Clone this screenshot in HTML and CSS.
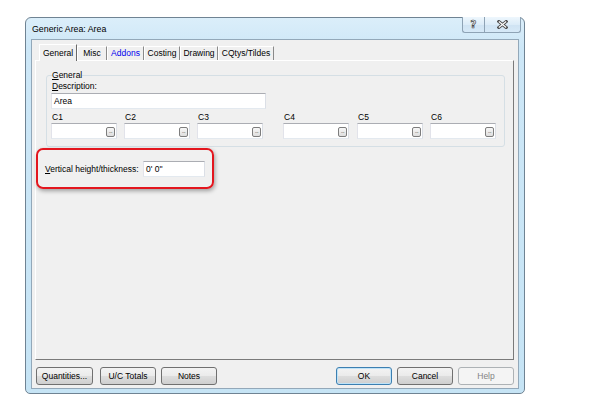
FILE: index.html
```html
<!DOCTYPE html>
<html>
<head>
<meta charset="utf-8">
<link rel="stylesheet" href="styles.css">
</head>
<body>
<div class="window">
  <div class="titlebar">
    <span class="title">Generic Area: Area</span>
    <div class="caption">
      <div class="cbtn help"><span class="qmark">?</span></div>
      <div class="cbtn close">
        <svg width="11" height="9" viewBox="0 0 11 9"><path d="M1.8 1.5 L9.2 7.5 M9.2 1.5 L1.8 7.5" stroke="#4d4d4d" stroke-width="3" stroke-linecap="square" fill="none"/><path d="M1.8 1.5 L9.2 7.5 M9.2 1.5 L1.8 7.5" stroke="#ffffff" stroke-width="1.1" fill="none"/></svg>
      </div>
    </div>
  </div>
  <div class="client">
    <div class="tabs">
      <div class="tab active t-general">General</div>
      <div class="tab t-misc">Misc</div>
      <div class="tab t-addons link">Addons</div>
      <div class="tab t-costing">Costing</div>
      <div class="tab t-drawing">Drawing</div>
      <div class="tab t-cqtys">CQtys/Tildes</div>
    </div>
    <div class="panel">
      <fieldset class="group">
        <legend><u>G</u>eneral</legend>
        <div class="lbl"><u>D</u>escription:</div>
        <div class="input desc-input">Area</div>
        <div class="cols">
          <div class="col"><div class="clbl">C1</div><div class="input cinput"><div class="dots">...</div></div></div>
          <div class="col"><div class="clbl">C2</div><div class="input cinput"><div class="dots">...</div></div></div>
          <div class="col"><div class="clbl">C3</div><div class="input cinput"><div class="dots">...</div></div></div>
          <div class="col c4"><div class="clbl">C4</div><div class="input cinput"><div class="dots">...</div></div></div>
          <div class="col c5"><div class="clbl">C5</div><div class="input cinput"><div class="dots">...</div></div></div>
          <div class="col last"><div class="clbl">C6</div><div class="input cinput"><div class="dots">...</div></div></div>
        </div>
      </fieldset>
      <div class="vrow">
        <div class="vlbl"><u>V</u>ertical height/thickness:</div>
        <div class="input v-input">0' 0''</div>
      </div>
      <div class="highlight"></div>
    </div>
    <div class="buttons">
      <div class="btn b-qty">Quantities...</div>
      <div class="btn b-uc">U/C Totals</div>
      <div class="btn b-notes">Notes</div>
      <div class="btn b-ok default">OK</div>
      <div class="btn b-next">Cancel</div>
      <div class="btn b-next disabled">Help</div>
    </div>
  </div>
</div>
</body>
</html>
```
FILE: styles.css
```css
body {
  margin: 0;
  background: #ffffff;
  font-family: "Liberation Sans", Arial, sans-serif;
  font-size: 8.5px;
  color: #000;
}

.window {
  margin: 17px 0 0 25px;
  width: 500px;
  height: 377px;
  box-sizing: border-box;
  border: 1px solid #6f8393;
  border-radius: 6px 6px 5px 5px;
  background: linear-gradient(#dbeefa, #cde7f7 30px, #c6e4f5);
  padding: 0 5px 4px 5px;
  display: flex;
  flex-direction: column;
}

.titlebar {
  height: 21px;
  display: flex;
  align-items: center;
  flex-shrink: 0;
}

.title {
  padding-left: 1px;
  font-size: 8.8px;
  color: #000;
}

.caption {
  margin-left: auto;
  margin-right: -2px;
  margin-top: -1px;
  align-self: flex-start;
  display: flex;
  height: 16px;
}

.cbtn {
  box-sizing: border-box;
  height: 16px;
  border: 1px solid #8ea3b5;
  border-top: none;
  background: linear-gradient(#eef7fd, #dcecf8 50%, #cfe3f3 51%, #d6e9f7);
  display: flex;
  align-items: center;
  justify-content: center;
}

.cbtn.help {
  width: 22px;
  border-right: none;
  border-radius: 0 0 0 3px;
}

.cbtn.close {
  width: 37px;
  border-radius: 0 0 3px 0;
}

.qmark {
  font-family: "DejaVu Sans", sans-serif;
  font-weight: bold;
  font-size: 10px;
  line-height: 10px;
  color: #fff;
  -webkit-text-stroke: 0.7px #4a4a4a;
}

.client {
  flex: 1;
  border: 1px solid #93a8b9;
  background: #f0f0f0;
  padding: 4px 4px 3px 3px;
  display: flex;
  flex-direction: column;
}

.tabs {
  display: flex;
  align-items: flex-end;
  height: 16px;
  padding-left: 4px;
  position: relative;
  z-index: 1;
  flex-shrink: 0;
}

.tab {
  box-sizing: border-box;
  height: 14px;
  line-height: 13px;
  text-align: center;
  border-left: 1px solid #ffffff;
  border-top: 1px solid #ffffff;
  border-right: 1px solid #8a8a8a;
  white-space: nowrap;
  flex-shrink: 0;
}

.tab.active {
  height: 17px;
  line-height: 17px;
  margin-bottom: -1px;
  background: #f0f0f0;
  border-right-color: #6a6a6a;
}

.tab.link { color: #0000ee; }

.t-general { width: 38px; }
.t-misc { width: 30px; }
.t-addons { width: 37px; }
.t-costing { width: 36px; }
.t-drawing { width: 38px; }
.t-cqtys { width: 56px; }

.panel {
  height: 300px;
  box-sizing: border-box;
  border: 1px solid;
  border-color: #ffffff #7a7a7a #7a7a7a #ffffff;
  position: relative;
  flex-shrink: 0;
}

.group {
  margin: 9px 0 0 10px;
  width: 459px;
  height: 77px;
  box-sizing: border-box;
  border: 1px solid #d5dfe5;
  border-radius: 3px;
  padding: 0 5px;
  min-width: 0;
}

.group legend {
  padding: 0;
  line-height: 11px;
}

.lbl { line-height: 11px; }

.input {
  box-sizing: border-box;
  height: 16px;
  background: #ffffff;
  border: 1px solid;
  border-color: #abadb3 #dbdfe6 #e3e9ef #e2e3ea;
}

.desc-input {
  width: 215px;
  margin: 1px 0 0 -1px;
  padding-left: 2px;
  line-height: 14px;
}

.cols {
  display: flex;
  margin: 3px 0 0 -1px;
}

.col {
  width: 66px;
  margin-right: 7px;
  flex-shrink: 0;
}

.col.c4 { margin-left: 13px; }
.col.c5 { margin-left: 1px; }
.col.last { margin-right: 0; }

.clbl {
  line-height: 11px;
  padding-left: 1px;
}

.cinput {
  display: flex;
  justify-content: flex-end;
  align-items: flex-end;
  padding: 0 1px 1px 0;
}

.dots {
  box-sizing: border-box;
  width: 9px;
  height: 10px;
  border: 1px solid #7d7d7d;
  border-radius: 2px;
  background: linear-gradient(#f7f7f7, #dedede);
  font-size: 6px;
  line-height: 6px;
  text-align: center;
  color: #333;
  letter-spacing: -0.5px;
}

.vrow {
  display: flex;
  align-items: center;
  margin: 14px 0 0 9px;
}

.vlbl { width: 98px; white-space: nowrap; }

.v-input {
  width: 62px;
  padding-left: 2px;
  line-height: 14px;
}

.highlight {
  position: absolute;
  left: 0;
  top: 87px;
  width: 178px;
  height: 41px;
  box-sizing: border-box;
  border: 2px solid #e3161e;
  border-radius: 7px;
  box-shadow: 1px 2px 4px rgba(0, 0, 0, 0.35);
}

.buttons {
  display: flex;
  margin-top: 7px;
  height: 18px;
  flex-shrink: 0;
}

.btn {
  box-sizing: border-box;
  width: 56px;
  height: 18px;
  border: 1px solid #707070;
  border-radius: 3px;
  background: linear-gradient(#f3f3f3, #ebebeb 48%, #dddddd 52%, #cfcfcf);
  display: flex;
  align-items: center;
  justify-content: center;
  white-space: nowrap;
  flex-shrink: 0;
}

.b-qty { width: 57px; margin-left: 1px; }
.b-uc { margin-left: 7px; }
.b-notes { margin-left: 5px; }
.b-ok { margin-left: auto; }
.b-next { margin-left: 5px; }

.btn.default {
  border-color: #3c7fb1;
  box-shadow: inset 0 0 0 1px #bfe3f8;
}

.btn.disabled {
  border-color: #adb2b5;
  background: #f4f4f4;
  color: #838383;
}
```
